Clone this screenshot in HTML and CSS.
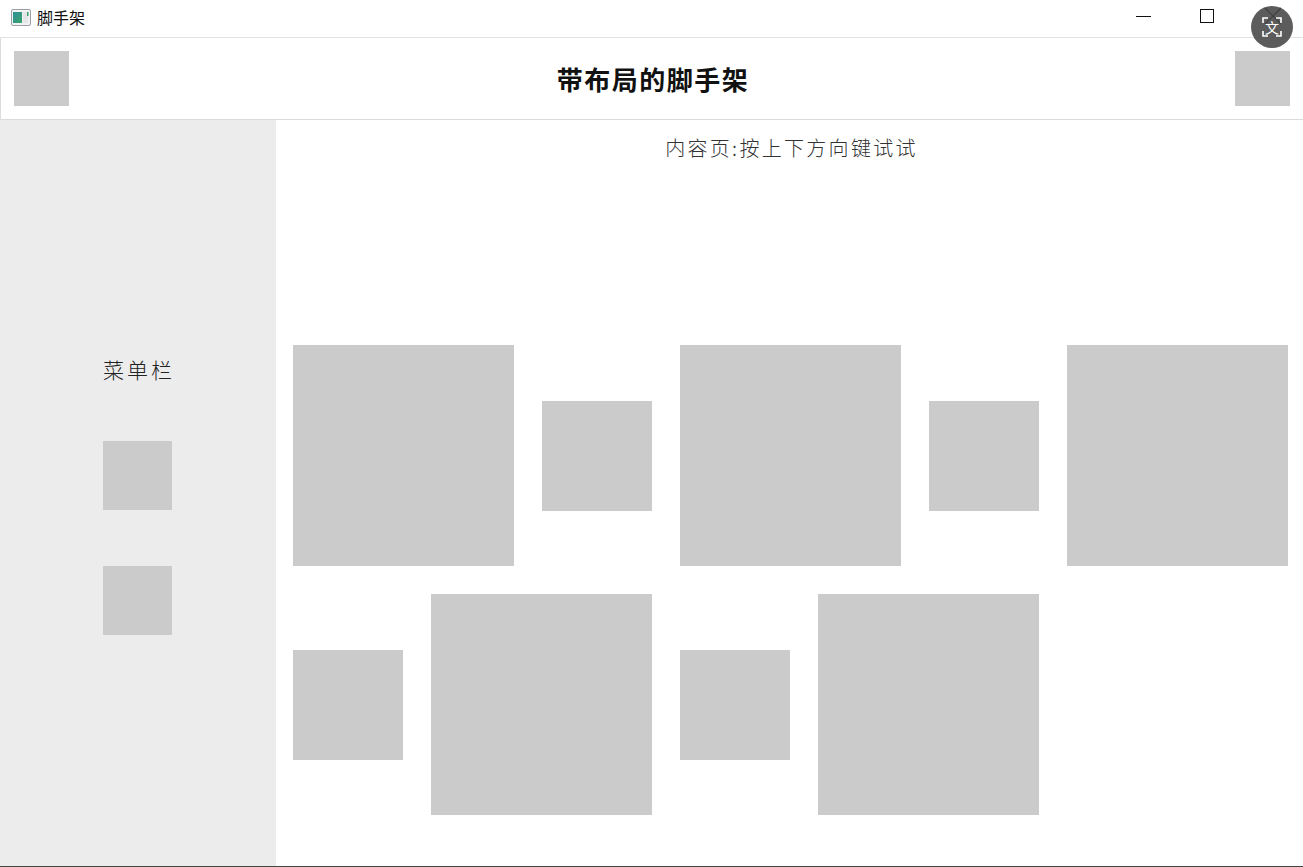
FILE: index.html
```html
<!DOCTYPE html>
<html lang="zh">
<head>
<meta charset="utf-8">
<title>脚手架</title>
<link rel="stylesheet" href="styles.css">
</head>
<body>
<div class="window">
  <div class="titlebar">
    <div class="app">
      <svg class="app-icon" width="20" height="17" viewBox="0 0 20 17">
        <defs>
          <linearGradient id="g" x1="0" y1="0" x2="1" y2="1">
            <stop offset="0" stop-color="#2f8f9a"/>
            <stop offset="1" stop-color="#3aa36a"/>
          </linearGradient>
        </defs>
        <rect x="0.5" y="0.5" width="19" height="16" rx="1.5" fill="#f2f2f2" stroke="#9aa0a6"/>
        <rect x="2" y="3" width="9" height="11" fill="url(#g)"/>
        <rect x="12" y="3" width="5" height="11" fill="#e4e6e8"/>
        <rect x="16" y="3" width="1.5" height="4" fill="#3aa36a"/>
      </svg>
      <span class="app-title">脚手架</span>
    </div>
    <div class="controls">
      <span class="ctl ctl-min"></span>
      <span class="ctl ctl-max"></span>
      <span class="ctl ctl-close">
        <svg width="18" height="18" viewBox="0 0 18 18"><path d="M1 1L17 17M17 1L1 17" stroke="#111" stroke-width="1.2"/></svg>
      </span>
    </div>
    <div class="translate-badge">
      <svg width="42" height="42" viewBox="0 0 42 42">
        <circle cx="21" cy="21" r="21" fill="rgba(70,70,70,0.88)"/>
        <path d="M12 17v-5h5M25 12h5v5M30 25v5h-5M17 30h-5v-5" fill="none" stroke="#fff" stroke-width="1.6"/>
      </svg>
      <span class="badge-text">文</span>
    </div>
  </div>
  <header class="appbar">
    <div class="sq sq-head"></div>
    <h1 class="appbar-title">带布局的脚手架</h1>
    <div class="sq sq-head"></div>
  </header>
  <div class="main">
    <aside class="sidebar">
      <div class="menu-title">菜单栏</div>
      <div class="sq sq-menu"></div>
      <div class="sq sq-menu"></div>
    </aside>
    <section class="content">
      <div class="content-title">内容页:按上下方向键试试</div>
      <div class="tiles">
        <div class="tile big"></div>
        <div class="tile small"></div>
        <div class="tile big"></div>
        <div class="tile small"></div>
        <div class="tile big"></div>
        <div class="tile small"></div>
        <div class="tile big"></div>
        <div class="tile small"></div>
        <div class="tile big"></div>
      </div>
    </section>
  </div>
</div>
</body>
</html>
```

FILE: styles.css
```css
* { box-sizing: border-box; }
html, body {
  margin: 0;
  padding: 0;
  background: #fff;
  font-family: "Noto Sans CJK SC", "Noto Sans", sans-serif;
}
.window {
  width: 1303px;
  height: 867px;
  display: flex;
  flex-direction: column;
  overflow: hidden;
}
.titlebar {
  position: relative;
  height: 38px;
  flex: 0 0 38px;
  border-bottom: 1px solid #e3e3e3;
  display: flex;
  align-items: flex-start;
  justify-content: space-between;
}
.app {
  display: flex;
  align-items: center;
  padding: 7px 0 0 11px;
  gap: 6px;
}
.app-icon { display: block; }
.app-title {
  font-size: 16px;
  line-height: 20px;
  color: #111;
}
.controls {
  display: flex;
  align-items: flex-start;
}
.ctl {
  display: block;
  position: relative;
}
.ctl-min {
  width: 15px;
  height: 1px;
  background: #111;
  margin: 16px 49px 0 0;
}
.ctl-max {
  width: 14px;
  height: 14px;
  border: 1px solid #111;
  margin: 9px 50px 0 0;
}
.ctl-close {
  width: 18px;
  height: 18px;
  margin: 7px 21px 0 0;
}
.ctl-close svg { display: block; }
.translate-badge {
  position: absolute;
  left: 1251px;
  top: 6px;
  width: 42px;
  height: 42px;
  z-index: 5;
}
.translate-badge svg { display: block; position: absolute; left: 0; top: 0; }
.badge-text {
  position: absolute;
  left: 0;
  top: 0;
  width: 42px;
  line-height: 42px;
  text-align: center;
  color: #fff;
  font-size: 14px;
}
.appbar {
  height: 82px;
  flex: 0 0 82px;
  border-left: 1px solid #dcdcdc;
  border-bottom: 1px solid #dcdcdc;
  display: flex;
  align-items: center;
  justify-content: space-between;
  padding: 0 13px 0 13px;
}
.sq { background: #cbcbcb; }
.sq-head { width: 55px; height: 55px; }
.appbar-title {
  margin: 0;
  font-size: 26px;
  font-weight: 700;
  color: #111;
  letter-spacing: 1.5px;
  line-height: 32px;
  margin-left: 2px;
}
.main {
  flex: 1;
  display: flex;
  border-bottom: 1px solid #444;
}
.sidebar {
  width: 276px;
  flex: 0 0 276px;
  background: #ececec;
  display: flex;
  flex-direction: column;
  align-items: center;
  justify-content: center;
  padding-top: 2px;
  padding-right: 1px;
}
.menu-title {
  font-size: 21px;
  font-weight: 300;
  line-height: 30px;
  letter-spacing: 3px;
  margin-left: 3px;
  color: #222;
  margin-bottom: 57px;
}
.sq-menu { width: 69px; height: 69px; }
.sq-menu + .sq-menu { margin-top: 56px; }
.content {
  flex: 1;
  display: flex;
  flex-direction: column;
}
.content-title {
  text-align: center;
  font-size: 20px;
  font-weight: 300;
  letter-spacing: 2.3px;
  line-height: 28px;
  color: #333;
  padding-top: 14px;
  margin-left: 4px;
}
.tiles {
  margin-top: 183px;
  padding-left: 17px;
  display: flex;
  flex-wrap: wrap;
  align-items: center;
  column-gap: 28px;
  row-gap: 28px;
}
.tile { background: #cbcbcb; }
.big { width: 221px; height: 221px; }
.small { width: 110px; height: 110px; }
```
